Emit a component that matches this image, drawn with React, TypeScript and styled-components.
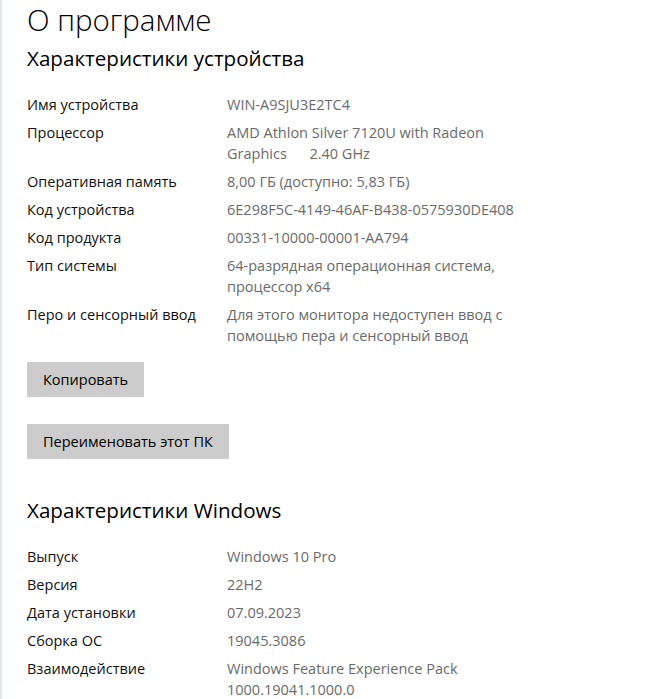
import React from "react";
import styled, { createGlobalStyle } from "styled-components";

const Global = createGlobalStyle`
  html, body { margin: 0; padding: 0; background: #ffffff; }
  body { font-family: "Open Sans", "Noto Sans", sans-serif; -webkit-font-smoothing: antialiased; }
`;

const Page = styled.div`
  box-sizing: border-box;
  width: 672px;
  height: 699px;
  overflow: hidden;
  border-left: 2px solid #e4e8e4;
  padding-left: 25px;
  background: #fff;
`;

const Title = styled.h1`
  margin: 0;
  padding-top: 1px;
  font-size: 29.5px;
  font-weight: 300;
  line-height: 38px;
  color: #000;
`;

const SectionTitle = styled.h2<{ $top: number }>`
  margin: ${(p) => p.$top}px 0 0 0;
  font-size: 20.6px;
  font-weight: 400;
  line-height: 28px;
  color: #000;
`;

const Specs = styled.dl<{ $top: number }>`
  margin: ${(p) => p.$top}px 0 0 0;
  display: grid;
  grid-template-columns: 200px 300px;
  row-gap: 7px;
  font-size: 14.5px;
  line-height: 21px;
`;

const Label = styled.dt`
  margin: 0;
  color: #111;
`;

const Value = styled.dd`
  margin: 0;
  color: #6b6b6b;
  white-space: pre-wrap;
`;

const Button = styled.button<{ $top: number }>`
  display: block;
  box-sizing: border-box;
  margin: ${(p) => p.$top}px 0 0 0;
  height: 35px;
  padding: 0 16px;
  border: none;
  background: #cccccc;
  font-family: inherit;
  font-size: 14.5px;
  color: #000;
`;

const device: [string, string][] = [
  ["Имя устройства", "WIN-A9SJU3E2TC4"],
  ["Процессор", "AMD Athlon Silver 7120U with Radeon Graphics      2.40 GHz"],
  ["Оперативная память", "8,00 ГБ (доступно: 5,83 ГБ)"],
  ["Код устройства", "6E298F5C-4149-46AF-B438-0575930DE408"],
  ["Код продукта", "00331-10000-00001-AA794"],
  ["Тип системы", "64-разрядная операционная система, процессор x64"],
  ["Перо и сенсорный ввод", "Для этого монитора недоступен ввод с помощью пера и сенсорный ввод"],
];

const windows: [string, string][] = [
  ["Выпуск", "Windows 10 Pro"],
  ["Версия", "22H2"],
  ["Дата установки", "07.09.2023"],
  ["Сборка ОС", "19045.3086"],
  ["Взаимодействие", "Windows Feature Experience Pack 1000.19041.1000.0"],
];

export default function App() {
  return (
    <>
      <Global />
      <Page>
        <Title>О программе</Title>
        <SectionTitle $top={5}>Характеристики устройства</SectionTitle>
        <Specs $top={22}>
          {device.map(([k, v]) => (
            <React.Fragment key={k}>
              <Label>{k}</Label>
              <Value>{v}</Value>
            </React.Fragment>
          ))}
        </Specs>
        <Button $top={16}>Копировать</Button>
        <Button $top={27}>Переименовать этот ПК</Button>
        <SectionTitle $top={37}>Характеристики Windows</SectionTitle>
        <Specs $top={22}>
          {windows.map(([k, v]) => (
            <React.Fragment key={k}>
              <Label>{k}</Label>
              <Value>{v}</Value>
            </React.Fragment>
          ))}
        </Specs>
      </Page>
    </>
  );
}
